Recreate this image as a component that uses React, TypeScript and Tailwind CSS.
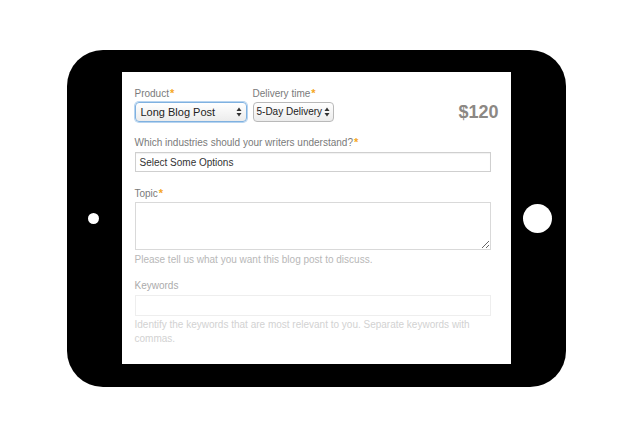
const font = "font-['Liberation_Sans','Helvetica',Arial,sans-serif]";

function Star() {
  return <span className="ml-[1px] text-[11px] font-bold text-[#f5a623]">*</span>;
}

function Arrows() {
  return (
    <svg width="6" height="10" viewBox="0 0 6 10" className="shrink-0">
      <path d="M3 0.5 L5.5 4 L0.5 4 Z" fill="#333" />
      <path d="M3 9.5 L5.5 6 L0.5 6 Z" fill="#333" />
    </svg>
  );
}

function FakeSelect({
  value,
  width,
  size,
  focused,
}: {
  value: string;
  width: string;
  size: string;
  focused?: boolean;
}) {
  return (
    <div
      className={`flex h-[20px] items-center justify-between rounded-[4px] border bg-gradient-to-b from-white to-[#ececec] leading-none text-[#222] ${width} ${size} ${
        focused ? "border-[#7fb1e0] shadow-[0_0_0_1px_#b7d4f0]" : "border-[#b9b9b9]"
      }`}
    >
      <span className="whitespace-nowrap">{value}</span>
      <Arrows />
    </div>
  );
}

function Label({ text, required, light }: { text: string; required?: boolean; light?: boolean }) {
  return (
    <div className={`h-[12px] text-[10px] leading-[12px] ${light ? "text-[#ababab]" : "text-[#7a7a7a]"}`}>
      {text}
      {required ? <Star /> : null}
    </div>
  );
}

export default function App() {
  return (
    <div className={`flex h-[438px] w-[632px] items-center justify-center bg-white ${font}`}>
      <div className="mt-[-1px] flex h-[337px] w-[499px] rounded-[36px] bg-black pb-[23px] pt-[22px]">
        <div className="flex w-[55px] items-center justify-center">
          <div className="h-[11px] w-[11px] translate-x-[-1px] rounded-full bg-white" />
        </div>
        <div className="flex w-[389px] flex-col bg-white pl-[13px] pr-[12px] pt-[15px]">
          <div className="flex items-end justify-between">
            <div className="flex gap-[6px]">
              <div className="flex flex-col gap-[3px]">
                <Label text="Product" required />
                <FakeSelect value="Long Blog Post" width="w-[112px]" size="text-[11px] pl-[5px] pr-[4px]" focused />
              </div>
              <div className="flex flex-col gap-[3px]">
                <Label text="Delivery time" required />
                <FakeSelect value="5-Day Delivery" width="w-[81px]" size="text-[10px] pl-[3px] pr-[3px]" />
              </div>
            </div>
            <div className="mb-[-1px] text-[18px] font-bold leading-[22px] text-[#8c8884]">$120</div>
          </div>

          <div className="mt-[14px]">
            <Label text="Which industries should your writers understand?" required />
          </div>
          <div className="mt-[4px] flex h-[20px] w-[356px] items-center border border-[#cfcfcf] px-[4px] text-[10px] text-[#333] shadow-[inset_0_1px_1px_rgba(0,0,0,0.06)]">
            Select Some Options
          </div>

          <div className="mt-[15px]">
            <Label text="Topic" required />
          </div>
          <textarea
            className="mt-[3px] block h-[48px] w-[356px] resize border border-[#d9d9d9] bg-white outline-none"
            defaultValue=""
          />
          <div className="mt-[3px] text-[10px] leading-[14px] text-[#b8b8b8]">
            Please tell us what you want this blog post to discuss.
          </div>

          <div className="mt-[13px]">
            <Label text="Keywords" light />
          </div>
          <div className="mt-[3px] h-[21px] w-[356px] border border-[#eeeeee]" />
          <div className="mt-[2px] w-[356px] text-[10px] leading-[14px] text-[#d2d2d2]">
            Identify the keywords that are most relevant to you. Separate keywords with commas.
          </div>
        </div>
        <div className="flex w-[55px] items-center justify-center">
          <div className="h-[29px] w-[29px] translate-x-[-1px] rounded-full bg-white" />
        </div>
      </div>
    </div>
  );
}
